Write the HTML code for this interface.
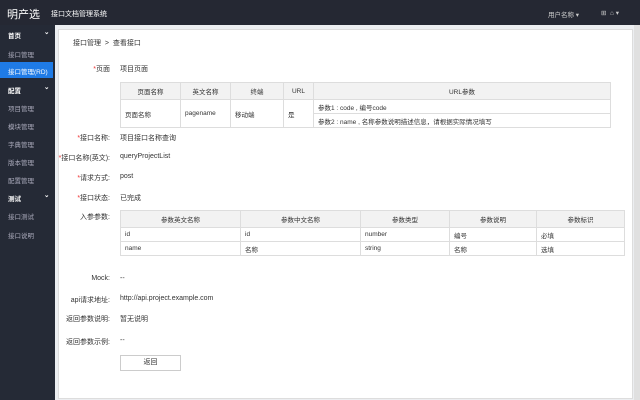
<!DOCTYPE html>
<html><head><meta charset="utf-8"><style>
*{margin:0;padding:0;box-sizing:border-box}
body{width:640px;height:400px;overflow:hidden;background:#eceef1;font-family:"Liberation Sans","Noto Sans CJK SC",sans-serif;font-size:7px;color:#333;position:relative}
.hd{position:absolute;left:0;top:0;width:640px;height:25px;background:#252833;color:#fff}
.sb{position:absolute;left:0;top:25px;width:55px;height:375px;background:#252a36;color:#aab}
.sb div{position:absolute;left:8px;font-size:6.5px;white-space:nowrap}
.sb .g{color:#fff;font-weight:bold}
.sb .g:after{content:"⌄";position:absolute;left:36px;top:-2px}
.card{position:absolute;left:58px;top:29px;width:575px;height:370px;background:#fff;border:1px solid #ddd}
.t{position:absolute;white-space:nowrap}
.l{position:absolute;right:530px;white-space:nowrap;text-align:right}
table{position:absolute;border-collapse:collapse;font-size:6.5px}
td,th{border:1px solid #ddd;padding:0 4px;height:14px;text-align:left;font-weight:normal;vertical-align:middle}
th{background:#f2f2f2;text-align:center;height:17px}
.r{color:#e33}
.btn{position:absolute;left:120px;top:355px;width:61px;height:16px;border:1px solid #ccc;text-align:center;line-height:14px}
.scr{position:absolute;left:634px;top:25px;width:6px;height:375px;background:#e0e0e0}
</style></head><body>
<div class="hd">
<div class="t" style="left:7px;top:6px;font-size:11px">明产选</div>
<div class="t" style="left:51px;top:9px;font-size:7px">接口文档管理系统</div>
<div class="t" style="left:548px;top:9px;font-size:6.5px;color:#ccc">用户名称 ▾</div>
<div class="t" style="left:601px;top:9px;font-size:6.5px;color:#ccc">⊞ &nbsp;⌂ ▾</div>
</div>
<div class="sb">
<div class="g" style="top:5px">首页</div>
<div style="top:24px">接口管理</div>
<div style="left:0;top:37px;width:53px;height:16px;background:#1f7be6"></div>
<div style="top:41px;color:#fff">接口管理(RD)</div>
<div class="g" style="top:60px">配置</div>
<div style="top:78px">项目管理</div>
<div style="top:96px">模块管理</div>
<div style="top:114px">字典管理</div>
<div style="top:132px">版本管理</div>
<div style="top:150px">配置管理</div>
<div class="g" style="top:168px">测试</div>
<div style="top:186px">接口测试</div>
<div style="top:205px">接口说明</div>
</div>
<div class="scr"></div>
<div class="card"></div>
<div class="t" style="left:73px;top:38px">接口管理 &nbsp;&gt;&nbsp; 查看接口</div>
<div class="l" style="top:64px"><span class="r">*</span>页面</div><div class="t" style="left:120px;top:64px">项目页面</div>
<table style="left:120px;top:82px;width:491px">
<tr><th style="width:60px">页面名称</th><th style="width:50px">英文名称</th><th style="width:53px">终端</th><th style="width:30px">URL</th><th>URL参数</th></tr>
<tr><td rowspan="2">页面名称</td><td rowspan="2">pagename</td><td rowspan="2">移动端</td><td rowspan="2">是</td><td>参数1 : code , 编号code</td></tr>
<tr><td>参数2 : name , 名称参数说明描述信息，请根据实际情况填写</td></tr>
</table>
<div class="l" style="top:133px"><span class="r">*</span>接口名称:</div><div class="t" style="left:120px;top:133px">项目接口名称查询</div>
<div class="l" style="top:153px"><span class="r">*</span>接口名称(英文):</div><div class="t" style="left:120px;top:153px">queryProjectList</div>
<div class="l" style="top:173px"><span class="r">*</span>请求方式:</div><div class="t" style="left:120px;top:173px">post</div>
<div class="l" style="top:193px"><span class="r">*</span>接口状态:</div><div class="t" style="left:120px;top:193px">已完成</div>
<div class="l" style="top:212px">入参参数:</div>
<table style="left:120px;top:210px;width:505px">
<tr><th style="width:120px">参数英文名称</th><th style="width:120px">参数中文名称</th><th style="width:89px">参数类型</th><th style="width:87px">参数说明</th><th>参数标识</th></tr>
<tr><td>id</td><td>id</td><td>number</td><td>编号</td><td>必填</td></tr>
<tr><td>name</td><td>名称</td><td>string</td><td>名称</td><td>选填</td></tr>
</table>
<div class="l" style="top:275px">Mock:</div><div class="t" style="left:120px;top:275px">--</div>
<div class="l" style="top:295px">api请求地址:</div><div class="t" style="left:120px;top:295px">http://api.project.example.com</div>
<div class="l" style="top:314px">返回参数说明:</div><div class="t" style="left:120px;top:314px">暂无说明</div>
<div class="l" style="top:337px">返回参数示例:</div><div class="t" style="left:120px;top:337px">--</div>
<div class="btn">返回</div>
</body></html>
